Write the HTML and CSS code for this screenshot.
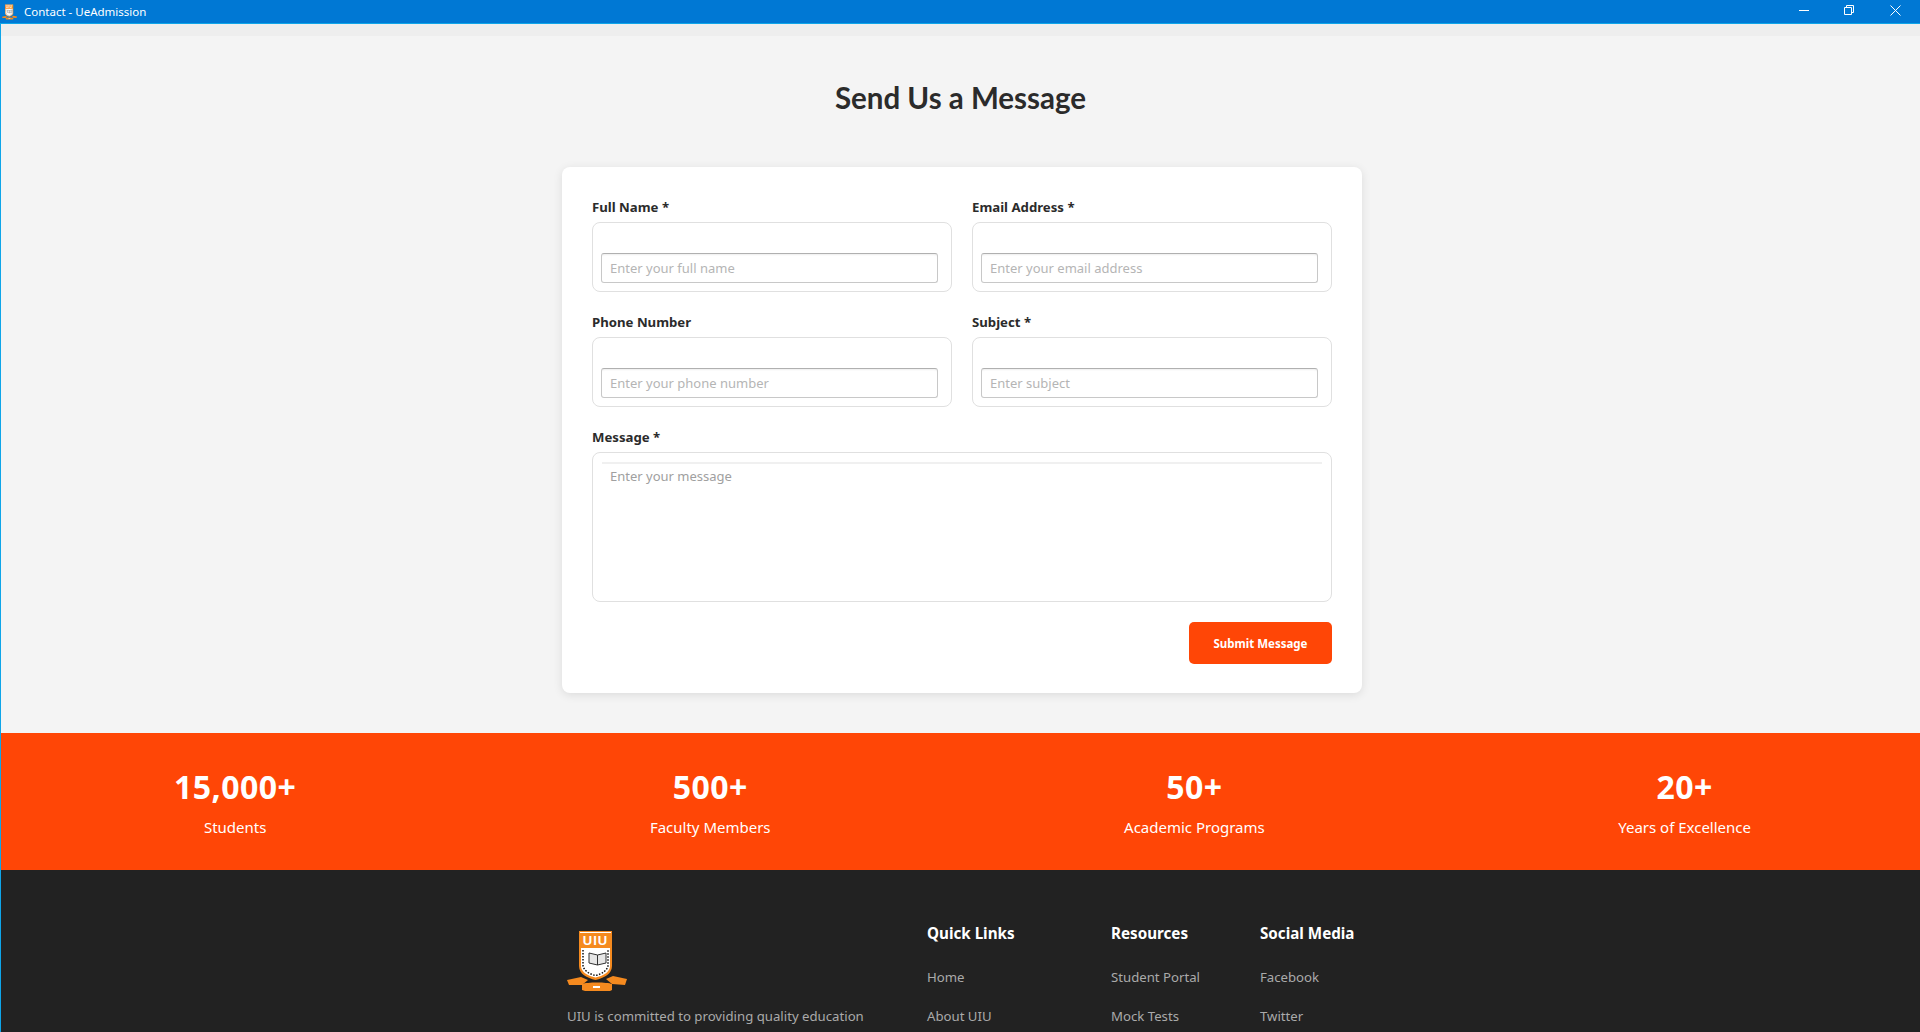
FILE: index.html
```html
<!DOCTYPE html>
<html lang="en">

<head>
    <meta charset="UTF-8">
    <meta name="viewport" content="width=device-width, initial-scale=1.0">
    <title>Contact - UeAdmission</title>
    <link rel="stylesheet" href="styles.css">
</head>

<body>
    <svg class="defs" width="0" height="0" aria-hidden="true">
        <symbol id="uiu-logo" viewBox="0 0 60 62">
            <path d="M12 1H45V36C45 44 37 48 28.500 50C20 48 12 44 12 36Z" fill="#f58a1f"/>
            <path d="M14 18H43V36C43 42 36 46 28.500 47.500C21 46 14 42 14 36Z" fill="#fff"/>
            <path d="M13 2.500H44" stroke="#fff" stroke-width="1"/>
            <text x="28.500" y="15" class="logo-text">UIU</text>
            <path d="M16 20V35C16 40 22 44 28.500 45.500C35 44 41 40 41 35V20" fill="none" stroke="#111" stroke-width="1.500" stroke-dasharray="1.500 1.500"/>
            <path d="M22 23L30.500 25L39 23V33L30.500 35L22 33Z" fill="#e6e6e6" stroke="#333" stroke-width="1"/>
            <path d="M30.500 25V35" stroke="#333" stroke-width="1"/>
            <path d="M0 50L14 47L21 50L15 55L2 55Z" fill="#f58a1f"/>
            <path d="M60 49L46 46L39 49L45 54L58 55Z" fill="#f58a1f"/>
            <path d="M15 54C20 52 40 52 45 54V60L43 61H18L15 60Z" fill="#f58a1f"/>
            <rect x="26" y="56" width="7" height="2" fill="#fff"/>
        </symbol>
    </svg>

    <!-- Barra da janela -->
    <header class="titlebar">
        <div class="titlebar-left">
            <svg class="titlebar-icon" width="15" height="16"><use href="#uiu-logo"/></svg>
            <span>Contact - UeAdmission</span>
        </div>
        <div class="window-controls">
            <svg width="10" height="10" viewBox="0 0 10 10"><path d="M0 5.500H10" stroke="#fff"/></svg>
            <svg width="10" height="10" viewBox="0 0 10 10"><path d="M0.500 2.500H7.500V9.500H0.500ZM2.500 2.500V0.500H9.500V7.500H7.500" fill="none" stroke="#fff"/></svg>
            <svg class="close-icon" width="11" height="11" viewBox="0 0 11 11"><path d="M0.500 0.500L10.500 10.500M10.500 0.500L0.500 10.500" stroke="#fff"/></svg>
        </div>
    </header>
    <div class="strip"></div>

    <main class="contact">
        <h1>Send Us a Message</h1>

        <form class="card">
            <div class="form-grid">
                <div class="field">
                    <label for="nome">Full Name *</label>
                    <div class="input-box"><input type="text" id="nome" placeholder="Enter your full name"></div>
                </div>
                <div class="field">
                    <label for="email">Email Address *</label>
                    <div class="input-box"><input type="text" id="email" placeholder="Enter your email address"></div>
                </div>
                <div class="field">
                    <label for="fone">Phone Number</label>
                    <div class="input-box"><input type="text" id="fone" placeholder="Enter your phone number"></div>
                </div>
                <div class="field">
                    <label for="assunto">Subject *</label>
                    <div class="input-box"><input type="text" id="assunto" placeholder="Enter subject"></div>
                </div>
                <div class="field field-wide">
                    <label for="mensagem">Message *</label>
                    <div class="text-box"><textarea id="mensagem" placeholder="Enter your message"></textarea></div>
                </div>
            </div>
            <div class="form-actions">
                <button type="button">Submit Message</button>
            </div>
        </form>
    </main>

    <!-- Numeros -->
    <section class="stats">
        <div class="stat"><strong>15,000+</strong><span>Students</span></div>
        <div class="stat"><strong>500+</strong><span>Faculty Members</span></div>
        <div class="stat"><strong>50+</strong><span>Academic Programs</span></div>
        <div class="stat"><strong>20+</strong><span>Years of Excellence</span></div>
    </section>

    <footer class="footer">
        <div class="footer-brand">
            <svg class="footer-logo" width="60" height="62"><use href="#uiu-logo"/></svg>
            <p>UIU is committed to providing quality education</p>
        </div>
        <div class="footer-col">
            <h3>Quick Links</h3>
            <a href="#">Home</a>
            <a href="#">About UIU</a>
        </div>
        <div class="footer-col">
            <h3>Resources</h3>
            <a href="#">Student Portal</a>
            <a href="#">Mock Tests</a>
        </div>
        <div class="footer-col">
            <h3>Social Media</h3>
            <a href="#">Facebook</a>
            <a href="#">Twitter</a>
        </div>
    </footer>
</body>

</html>
```

FILE: styles.css
```css
html, body {
    height: 1032px;
    overflow: hidden;
}

body {
    margin: 0;
    display: flex;
    flex-direction: column;
    font-family: "Noto Sans", sans-serif;
    background-color: #f4f4f4;
    box-shadow: inset 1px 0 0 #0ea5e9;
}

.defs {
    display: none;
}

.logo-text {
    font-family: "Liberation Sans", sans-serif;
    font-size: 13px;
    font-weight: 700;
    letter-spacing: 1px;
    fill: #fff;
    text-anchor: middle;
}

.titlebar {
    height: 23px;
    flex: none;
    display: flex;
    justify-content: space-between;
    align-items: center;
    background-color: #0078d4;
    border-bottom: 1px solid #0ea5e9;
    color: #fff;
    font-size: 11.500px;
}

.titlebar-left {
    display: flex;
    align-items: center;
    gap: 7px;
    padding-left: 2px;
}

.window-controls {
    display: flex;
    align-items: center;
    gap: 35px;
    padding-right: 19px;
    margin-top: -3px;
}

.close-icon {
    margin-left: 1px;
}

.strip {
    height: 12px;
    flex: none;
    margin-left: 1px;
    background-color: #eeeeee;
}

.contact {
    height: 697px;
    flex: none;
    padding-left: 1px;
    box-sizing: border-box;
}

h1 {
    margin: 44px 0 51px 0;
    font-family: "Lato", sans-serif;
    font-size: 29.500px;
    line-height: 36px;
    font-weight: 700;
    text-align: center;
    color: #2b2b2b;
}

.card {
    width: 800px;
    height: 526px;
    box-sizing: border-box;
    margin-left: 561px;
    padding: 30px 30px 29px 30px;
    background-color: #fff;
    border-radius: 8px;
    box-shadow: 0 2px 10px rgba(0, 0, 0, 0.1);
}

.form-grid {
    display: grid;
    grid-template-columns: 360px 360px;
    gap: 20px;
}

.field-wide {
    grid-column: 1 / 3;
}

label {
    display: block;
    margin-bottom: 5px;
    font-size: 13.200px;
    line-height: 20px;
    font-weight: 700;
    color: #2b2b2b;
}

.input-box,
.text-box {
    box-sizing: border-box;
    background-color: #fff;
    border: 1px solid #e0e0e0;
    border-radius: 8px;
}

.input-box {
    height: 70px;
    padding: 30px 13px 8px 8px;
}

.input-box input {
    display: block;
    width: 100%;
    height: 30px;
    box-sizing: border-box;
    padding: 0 8px;
    font-family: "Noto Sans", sans-serif;
    font-size: 13px;
    border: 1px solid #c8c8c8;
    border-top-color: #b0b0b0;
    border-radius: 3px;
    box-shadow: inset 0 2px 2px -1px #eeeeee;
}

.input-box input::placeholder {
    color: #b5b5b5;
}

.text-box {
    height: 150px;
    padding: 9px 9px 8px 9px;
}

.text-box textarea {
    display: block;
    width: 100%;
    height: 100%;
    box-sizing: border-box;
    padding: 3px 8px;
    font-family: "Noto Sans", sans-serif;
    font-size: 13px;
    border: none;
    border-top: 2px solid #f0f0f0;
    outline: none;
    resize: none;
}

.text-box textarea::placeholder {
    color: #a0a0a0;
}

.form-actions {
    display: flex;
    justify-content: flex-end;
    margin-top: 20px;
}

.form-actions button {
    width: 143px;
    height: 42px;
    font-family: "Noto Sans", sans-serif;
    font-size: 11.500px;
    font-weight: 700;
    color: #fff;
    background-color: #ff4606;
    border: none;
    border-radius: 5px;
}

.stats {
    height: 137px;
    flex: none;
    box-sizing: border-box;
    margin-left: 1px;
    padding: 31px 169px 0 173px;
    display: flex;
    justify-content: space-between;
    background-color: #ff4606;
    color: #fff;
}

.stat {
    display: flex;
    flex-direction: column;
    align-items: center;
}

.stat strong {
    font-family: "Open Sans", sans-serif;
    font-size: 32px;
    line-height: 46px;
    font-weight: 700;
    letter-spacing: 0.500px;
}

.stat span {
    margin-top: 7px;
    font-size: 15px;
    line-height: 20px;
}

.footer {
    flex: 1;
    margin-left: 1px;
    padding: 50px 0 0 566px;
    display: grid;
    grid-template-columns: 360px 184px 149px auto;
    background-color: #222222;
    color: #aaaaaa;
    font-size: 13.200px;
}

.footer-logo {
    display: block;
    margin-top: 10px;
}

.footer-brand p {
    margin: 14px 0 0 0;
    line-height: 20px;
}

.footer-col h3 {
    margin: 2px 0 23px 0;
    font-size: 15.200px;
    line-height: 22px;
    font-weight: 700;
    color: #fff;
}

.footer-col a {
    display: block;
    margin-bottom: 19px;
    line-height: 20px;
    color: #aaaaaa;
    text-decoration: none;
}
```
